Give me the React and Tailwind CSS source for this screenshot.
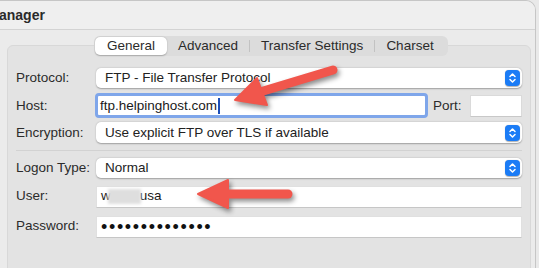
import React from 'react';

const font = { fontFamily: '"Liberation Sans", Arial, sans-serif' };

function Stepper() {
  return (
    <div className="w-[15px] h-[16px] rounded-[4px] bg-[#1b7cf6] flex items-center justify-center mr-[2px] shadow-[0_0.5px_1px_rgba(0,0,0,0.3)]">
      <svg width="9" height="12" viewBox="0 0 9 12" fill="none" stroke="white" strokeWidth="1.5" strokeLinecap="round" strokeLinejoin="round">
        <path d="M2 4.5 L4.5 2 L7 4.5" />
        <path d="M2 7.5 L4.5 10 L7 7.5" />
      </svg>
    </div>
  );
}

function Popup({ value, h = 'h-[20px]' }) {
  return (
    <div className={`flex-1 ${h} bg-white rounded-[5px] shadow-[0_0.5px_1.5px_rgba(0,0,0,0.3)] flex items-center pl-[9px]`}>
      <span className="flex-1 text-[13.5px] text-[#222]">{value}</span>
      <Stepper />
    </div>
  );
}

function Row({ label, mt, children }) {
  return (
    <div className={`flex items-center ${mt}`}>
      <div className="w-[80px] text-[13.5px] text-[#2b2b2b]">{label}</div>
      {children}
    </div>
  );
}

const tabs = ['General', 'Advanced', 'Transfer Settings', 'Charset'];

export default function App() {
  return (
    <div className="relative w-[539px] h-[268px] overflow-hidden bg-[#e9e9e9]" style={font}>
      <div className="w-[536px] h-[268px] border-t border-r border-[#c6c6c6] rounded-tr-[10px] overflow-hidden bg-[#ebebeb] flex flex-col">
        <div className="h-[29px] shrink-0 bg-[#efefef] border-b border-[#d3d3d3] flex items-center">
          <span className="text-[14px] font-bold text-[#2a2a2a] -ml-[1px]">anager</span>
        </div>

        <div className="pt-[15px] pl-[7px]">
          <div className="w-[524px] h-[240px] bg-[#e3e3e3] border border-[#d8d8d8] rounded-[6px] flex flex-col px-[8px]">
            <div className="-mt-[10px] self-start ml-[78px] h-[20px] bg-[#dcdcdc] rounded-[6px] flex items-center p-[1px] text-[13.5px] text-[#2b2b2b]">
              {tabs.map((t, i) => (
                <React.Fragment key={t}>
                  {i > 1 && <div className="w-px h-[12px] bg-[#c2c2c2]" />}
                  <div className={`h-[18px] flex items-center ${i === 0 ? 'bg-white rounded-[5px] shadow-[0_0.5px_1.5px_rgba(0,0,0,0.25)] px-[12px]' : i === 3 ? 'pl-[11px] pr-[13px]' : 'px-[11px]'}`}>
                    {t}
                  </div>
                </React.Fragment>
              ))}
            </div>

            <Row label="Protocol:" mt="mt-[12px]">
              <Popup value="FTP - File Transfer Protocol" />
            </Row>

            <Row label="Host:" mt="mt-[5px]">
              <div className="w-[333px] -ml-[1px] h-[25px] rounded-[4px] border-[3px] border-[#7fa6ea] bg-white flex items-center pl-[2px]">
                <span className="text-[13.5px] text-[#1a1a1a]">ftp.helpinghost.com</span>
                <span className="w-[2px] h-[16px] bg-[#1d4fb8] ml-[1px]" />
              </div>
              <span className="ml-[5px] w-[37px] text-[13.5px] text-[#2b2b2b]">Port:</span>
              <div className="flex-1 h-[22px] bg-white border border-[#dadada] border-b-[#c8c8c8]" />
            </Row>

            <Row label="Encryption:" mt="mt-[4px]">
              <Popup value="Use explicit FTP over TLS if available" h="h-[21px]" />
            </Row>

            <div className="mt-[7px] h-px bg-[#d2d2d2]" />

            <Row label="Logon Type:" mt="mt-[7px]">
              <Popup value="Normal" />
            </Row>

            <Row label="User:" mt="mt-[7px]">
              <div className="flex-1 h-[22px] bg-white border border-[#e0e0e0] border-b-[#c6c6c6] flex items-center pl-[4px] text-[13.5px] text-[#1a1a1a]">
                <span>w</span>
                <span className="w-[33px] h-[15px] bg-[#dedede] blur-[1.5px] -ml-[3px]" />
                <span className="-ml-[1px]">usa</span>
              </div>
            </Row>

            <Row label="Password:" mt="mt-[8px]">
              <div className="flex-1 h-[22px] bg-white border border-[#e0e0e0] border-b-[#c6c6c6] flex items-center pl-[4px] overflow-hidden">
                <span className="text-[18px] leading-none tracking-[1.65px] text-[#111]">••••••••••••••</span>
              </div>
            </Row>
          </div>
        </div>
      </div>

      <svg className="absolute inset-0 pointer-events-none" width="539" height="268" style={{ filter: 'drop-shadow(2px 3px 2.5px rgba(0,0,0,0.45))' }}>
        <g fill="#f1564c" stroke="#f1564c" strokeLinecap="round" strokeLinejoin="round">
          <line x1="333" y1="70" x2="260" y2="92" strokeWidth="9" />
          <polygon points="235,100 257,78 267,105" strokeWidth="2" />
          <line x1="288" y1="194" x2="224" y2="194" strokeWidth="9" />
          <polygon points="198,194 228,180 228,208" strokeWidth="2" />
        </g>
      </svg>
    </div>
  );
}
